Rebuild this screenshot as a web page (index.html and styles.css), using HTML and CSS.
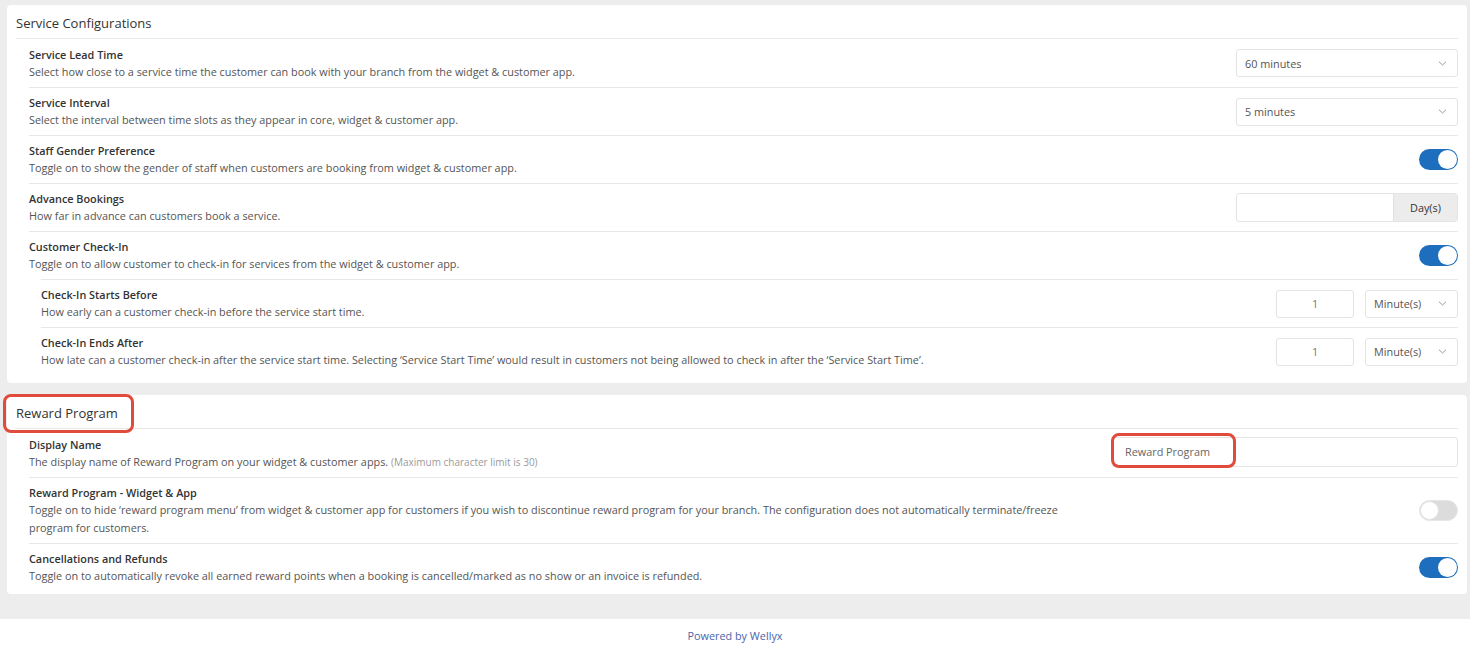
FILE: index.html
```html
<!DOCTYPE html>
<html lang="en">
<head>
<meta charset="utf-8">
<title>Service Configurations</title>
<link rel="stylesheet" href="styles.css">
</head>
<body>
<main class="page">
  <section class="card">
    <h2 class="card-title">Service Configurations</h2>
    <div class="rows">
      <div class="row">
        <div class="row-text">
          <div class="label">Service Lead Time</div>
          <div class="desc">Select how close to a service time the customer can book with your branch from the widget &amp; customer app.</div>
        </div>
        <div class="select wide"><span>60 minutes</span><svg class="chev" width="9" height="5" viewBox="0 0 9 5"><polyline points="1,0.8 4.5,4 8,0.8" fill="none" stroke="#9a9a9a" stroke-width="1"/></svg></div>
      </div>
      <div class="row">
        <div class="row-text">
          <div class="label">Service Interval</div>
          <div class="desc">Select the interval between time slots as they appear in core, widget &amp; customer app.</div>
        </div>
        <div class="select wide"><span>5 minutes</span><svg class="chev" width="9" height="5" viewBox="0 0 9 5"><polyline points="1,0.8 4.5,4 8,0.8" fill="none" stroke="#9a9a9a" stroke-width="1"/></svg></div>
      </div>
      <div class="row">
        <div class="row-text">
          <div class="label">Staff Gender Preference</div>
          <div class="desc">Toggle on to show the gender of staff when customers are booking from widget &amp; customer app.</div>
        </div>
        <div class="toggle on"><span class="knob"></span></div>
      </div>
      <div class="row">
        <div class="row-text">
          <div class="label">Advance Bookings</div>
          <div class="desc">How far in advance can customers book a service.</div>
        </div>
        <div class="input-group"><div class="input-field"></div><div class="addon">Day(s)</div></div>
      </div>
      <div class="row">
        <div class="row-text">
          <div class="label">Customer Check-In</div>
          <div class="desc">Toggle on to allow customer to check-in for services from the widget &amp; customer app.</div>
        </div>
        <div class="toggle on"><span class="knob"></span></div>
      </div>
      <div class="row sub">
        <div class="row-text">
          <div class="label">Check-In Starts Before</div>
          <div class="desc">How early can a customer check-in before the service start time.</div>
        </div>
        <div class="pair">
          <div class="num">1</div>
          <div class="select small"><span>Minute(s)</span><svg class="chev" width="9" height="5" viewBox="0 0 9 5"><polyline points="1,0.8 4.5,4 8,0.8" fill="none" stroke="#9a9a9a" stroke-width="1"/></svg></div>
        </div>
      </div>
      <div class="row sub">
        <div class="row-text">
          <div class="label">Check-In Ends After</div>
          <div class="desc">How late can a customer check-in after the service start time. Selecting ‘Service Start Time’ would result in customers not being allowed to check in after the ‘Service Start Time’.</div>
        </div>
        <div class="pair">
          <div class="num">1</div>
          <div class="select small"><span>Minute(s)</span><svg class="chev" width="9" height="5" viewBox="0 0 9 5"><polyline points="1,0.8 4.5,4 8,0.8" fill="none" stroke="#9a9a9a" stroke-width="1"/></svg></div>
        </div>
      </div>
    </div>
  </section>

  <section class="card card-tight">
    <h2 class="card-title"><span class="annotated">Reward Program<span class="mark mark-title"></span></span></h2>
    <div class="rows">
      <div class="row">
        <div class="row-text">
          <div class="label">Display Name</div>
          <div class="desc">The display name of Reward Program on your widget &amp; customer apps. <span class="note">(Maximum character limit is 30)</span></div>
        </div>
        <div class="text-input"><span class="annotated">Reward Program<span class="mark mark-input"></span></span></div>
      </div>
      <div class="row">
        <div class="row-text">
          <div class="label">Reward Program - Widget &amp; App</div>
          <div class="desc">Toggle on to hide ‘reward program menu’ from widget &amp; customer app for customers if you wish to discontinue reward program for your branch. The configuration does not automatically terminate/freeze program for customers.</div>
        </div>
        <div class="toggle off"><span class="knob"></span></div>
      </div>
      <div class="row">
        <div class="row-text">
          <div class="label">Cancellations and Refunds</div>
          <div class="desc">Toggle on to automatically revoke all earned reward points when a booking is cancelled/marked as no show or an invoice is refunded.</div>
        </div>
        <div class="toggle on"><span class="knob"></span></div>
      </div>
    </div>
  </section>
</main>
<footer class="footer">Powered by Wellyx</footer>
</body>
</html>
```

FILE: styles.css
```css
* { box-sizing: border-box; }

html, body {
  margin: 0;
  padding: 0;
}

body {
  background: #ededed;
  font-family: "Open Sans", "Liberation Sans", sans-serif;
  color: #333;
  font-size: 10.85px;
}

.page {
  padding: 5px 3px 25px 7px;
  display: flex;
  flex-direction: column;
  gap: 12px;
}

.card {
  background: #fff;
  border-radius: 4px;
  padding: 0 9px 8px;
}

.card-tight {
  padding-bottom: 3px;
}

.card-title {
  margin: 0;
  font-size: 13px;
  font-weight: 400;
  color: #333;
  padding: 4px 0 0;
  line-height: 29px;
  border-bottom: 1px solid #e8e8e8;
}

.rows {
  padding-left: 13px;
}

.row {
  display: flex;
  align-items: center;
  justify-content: space-between;
  min-height: 48px;
  padding: 6px 0 6px;
  border-top: 1px solid #e8e8e8;
}

.rows .row:first-child {
  border-top: none;
  min-height: 48px;
}

.row.sub {
  margin-left: 12px;
}

.row-text {
  max-width: 1045px;
}

.label {
  font-weight: 600;
  font-size: 10.85px;
  line-height: 17px;
  color: #333;
}

.desc {
  font-size: 10.85px;
  line-height: 18px;
  color: #555;
}

.note {
  font-size: 10px;
  color: #9a9a9a;
}

.select {
  height: 28px;
  border: 1px solid #e4e4e4;
  border-radius: 3px;
  display: flex;
  align-items: center;
  justify-content: space-between;
  padding: 0 10px 0 8px;
  color: #555;
  background: #fff;
}

.select.wide { width: 222px; }
.select.small { width: 93px; }

.pair {
  display: flex;
  gap: 11px;
}

.num {
  width: 78px;
  height: 28px;
  border: 1px solid #e4e4e4;
  border-radius: 3px;
  display: flex;
  align-items: center;
  justify-content: center;
  color: #777;
}

.input-group {
  width: 222px;
  height: 29px;
  display: flex;
  border: 1px solid #e4e4e4;
  border-radius: 3px;
  overflow: hidden;
}

.input-field { flex: 1; }

.addon {
  width: 64px;
  background: #ececec;
  border-left: 1px solid #e0e0e0;
  display: flex;
  align-items: center;
  justify-content: center;
  color: #333;
}

.toggle {
  position: relative;
  width: 39px;
  height: 21px;
  border-radius: 11px;
  flex-shrink: 0;
}

.toggle.on { background: #1d6fbe; }
.toggle.off { background: #dcdcdc; border: 1px solid #e6e6e6; }

.knob {
  position: absolute;
  top: 1px;
  width: 19px;
  height: 19px;
  border-radius: 50%;
  background: #fff;
}

.toggle.on .knob { right: 1px; }
.toggle.off .knob { left: 0; top: 0; border: 1px solid #e2e2e2; }

.text-input {
  width: 346px;
  height: 30px;
  margin-bottom: 3px;
  border: 1px solid #e4e4e4;
  border-radius: 3px;
  display: flex;
  align-items: center;
  padding-left: 12px;
  color: #666;
}

.annotated {
  position: relative;
}

.mark {
  position: absolute;
  border: 3px solid #e14b3b;
  border-radius: 8px;
  pointer-events: none;
}

.mark-title {
  left: -13px;
  top: -10px;
  width: 131px;
  height: 39px;
}

.mark-input {
  left: -14px;
  top: -11px;
  width: 125px;
  height: 35px;
  border-width: 3.5px;
}

.footer {
  background: #fff;
  height: 31px;
  text-align: center;
  color: #4a64aa;
  font-size: 10.85px;
  line-height: 34px;
}
```
